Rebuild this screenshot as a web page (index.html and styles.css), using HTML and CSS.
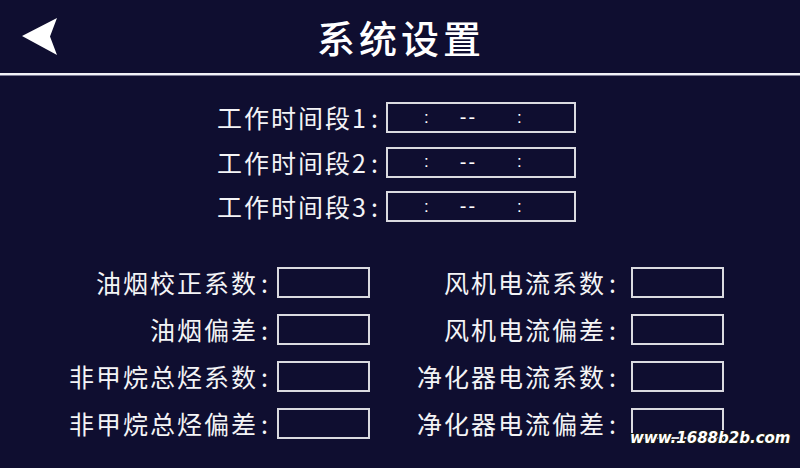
FILE: index.html
```html
<!DOCTYPE html>
<html lang="zh-CN">
<head>
<meta charset="utf-8">
<title>系统设置</title>
<link rel="stylesheet" href="styles.css">
</head>
<body>
<div class="screen">
  <header class="header">
    <svg class="back" width="36" height="38" viewBox="0 0 36 38" aria-hidden="true">
      <path d="M0 18 L35 0 L28 18.5 L35 37 Z" fill="#ffffff"/>
    </svg>
    <h1 class="title">系统设置</h1>
    <span></span>
  </header>

  <section class="times">
    <div class="time-row">
      <span class="label">工作时间段1<span class="colon">:</span></span>
      <div class="time-box"><span class="c1">:</span><span class="dash">--</span><span class="c2">:</span></div>
    </div>
    <div class="time-row">
      <span class="label">工作时间段2<span class="colon">:</span></span>
      <div class="time-box"><span class="c1">:</span><span class="dash">--</span><span class="c2">:</span></div>
    </div>
    <div class="time-row">
      <span class="label">工作时间段3<span class="colon">:</span></span>
      <div class="time-box"><span class="c1">:</span><span class="dash">--</span><span class="c2">:</span></div>
    </div>
  </section>

  <section class="params">
    <span class="label">油烟校正系数<span class="colon">:</span></span><div class="box"></div>
    <span class="label r">风机电流系数<span class="colon">:</span></span><div class="box"></div>

    <span class="label">油烟偏差<span class="colon">:</span></span><div class="box"></div>
    <span class="label r">风机电流偏差<span class="colon">:</span></span><div class="box"></div>

    <span class="label">非甲烷总烃系数<span class="colon">:</span></span><div class="box"></div>
    <span class="label r">净化器电流系数<span class="colon">:</span></span><div class="box"></div>

    <span class="label">非甲烷总烃偏差<span class="colon">:</span></span><div class="box"></div>
    <span class="label r">净化器电流偏差<span class="colon">:</span></span><div class="box"></div>
  </section>

  <div class="watermark">www.1688b2b.com</div>
</div>
</body>
</html>
```

FILE: styles.css
```css
html, body {
  margin: 0;
  padding: 0;
  background: #0f0e30;
}

body {
  width: 800px;
  height: 468px;
  overflow: hidden;
  font-family: "Noto Sans CJK SC", "Noto Sans", sans-serif;
  color: #f4f4f6;
}

.screen {
  position: relative;
  width: 800px;
  height: 468px;
}

.header {
  height: 73px;
  display: grid;
  grid-template-columns: 1fr auto 1fr;
  align-items: center;
  padding: 0 0 0 22px;
  border-bottom: 2px solid #f2f2f6;
  box-shadow: 0 1px 0 #7c7b95;
}

.back {
  display: block;
  margin-top: 1px;
}

.title {
  margin: 0;
  font-size: 38px;
  font-weight: 500;
  letter-spacing: 4px;
  margin-right: -4px;
  line-height: 1;
  color: #ffffff;
  position: relative;
  left: -12px;
}

.label {
  font-size: 25px;
  letter-spacing: 2px;
  line-height: 31px;
  white-space: nowrap;
}

.colon {
  margin-left: 3px;
}

.times {
  padding: 27px 0 0 217px;
  display: flex;
  flex-direction: column;
  gap: 13.5px;
}

.time-row {
  display: flex;
  align-items: center;
  height: 31px;
}

.time-row .label {
  width: 169px;
}

.time-box {
  box-sizing: border-box;
  width: 190px;
  height: 31px;
  border: 2px solid #dadae0;
  display: flex;
  align-items: center;
  font-family: "Liberation Sans", sans-serif;
  font-size: 17px;
  color: #ffffff;
  padding-left: 36px;
}

.time-box .dash {
  margin-left: 31px;
  font-size: 20px;
  letter-spacing: 2px;
}

.time-box .c2 {
  margin-left: 40px;
}

.params {
  margin-top: 45px;
  display: grid;
  grid-template-columns: 277px 93px 261px 93px;
  row-gap: 16px;
  align-items: center;
}

.params .label {
  text-align: right;
  padding-right: 7px;
}

.params .label.r {
  padding-right: 13px;
}

.box {
  box-sizing: border-box;
  height: 31px;
  border: 2px solid #dadae0;
}

.watermark {
  position: absolute;
  left: 630px;
  top: 429px;
  font-family: "DejaVu Sans", sans-serif;
  font-size: 15px;
  font-weight: bold;
  font-style: italic;
  color: #ffffff;
  text-shadow: 1px 1px 0 #1a1a1a, -1px -1px 0 #1a1a1a, 1px -1px 0 #1a1a1a, -1px 1px 0 #1a1a1a;
}
```
